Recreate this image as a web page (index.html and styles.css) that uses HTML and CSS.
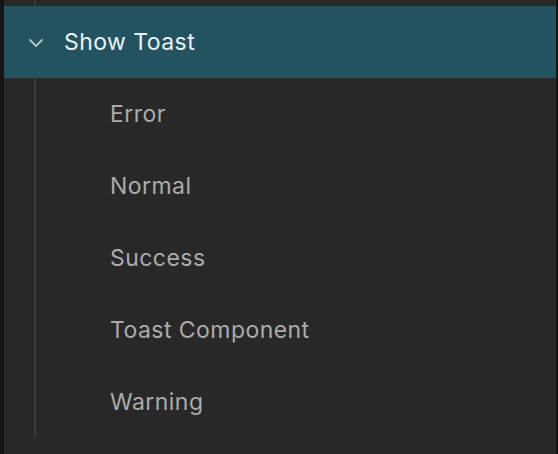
FILE: index.html
```html
<!DOCTYPE html>
<html>
<head>
<meta charset="utf-8">
<link rel="stylesheet" href="styles.css">
</head>
<body>
<div class="panel">
  <div class="gap"><span class="rail"></span></div>
  <div class="group-head">
    <svg class="chev" width="16" height="10" viewBox="0 0 16 10"><path d="M2 2 L8 8 L14 2" fill="none" stroke="#b8c4c8" stroke-width="1.8" stroke-linecap="round" stroke-linejoin="round"/></svg>
    <span class="head-label">Show Toast</span>
  </div>
  <ul class="items">
    <li>Error</li>
    <li>Normal</li>
    <li>Success</li>
    <li>Toast Component</li>
    <li>Warning</li>
  </ul>
</div>
</body>
</html>
```
FILE: styles.css
```css
html, body {
  margin: 0;
  padding: 0;
  background: #282828;
  height: 100%;
}
.panel {
  height: 454px;
  box-sizing: border-box;
  border-left: 4px solid #141414;
  border-right: 2px solid #141414;
  font-family: Inter, "Noto Sans", sans-serif;
}
.gap {
  height: 6px;
  padding-left: 30px;
}
.rail {
  display: block;
  width: 2px;
  height: 6px;
  background: #3a3a3a;
}
.group-head {
  height: 72px;
  background: #22535f;
  display: flex;
  align-items: center;
}
.chev {
  margin-left: 24px;
  margin-top: 1px;
}
.head-label {
  margin-left: 20px;
  font-size: 23px;
  color: #eef2f3;
  letter-spacing: 0.45px;
}
.items {
  list-style: none;
  margin: 0 0 0 30px;
  padding: 0;
  border-left: 2px solid #3a3a3a;
  width: max-content;
  height: 359px;
}
.items li {
  height: 72px;
  display: flex;
  align-items: center;
  padding-left: 74px;
  font-size: 23px;
  color: #ababab;
  letter-spacing: 0.45px;
}
```
